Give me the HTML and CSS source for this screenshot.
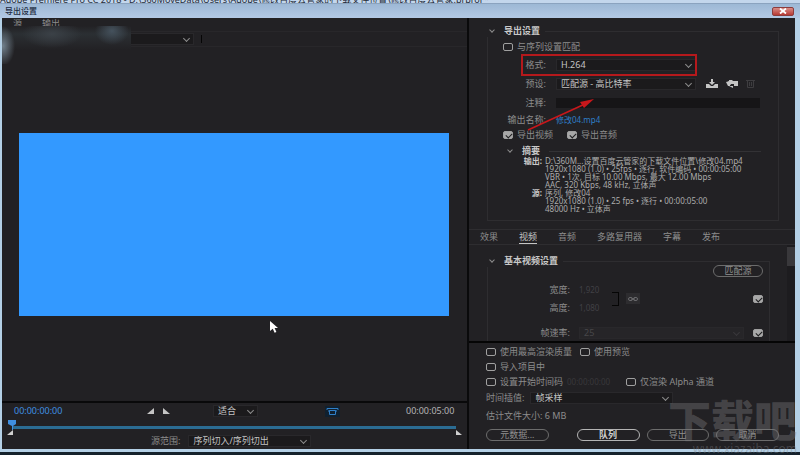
FILE: index.html
```html
<!DOCTYPE html>
<html lang="zh-CN">
<head>
  <meta charset="UTF-8" />
  <meta name="viewport" content="width=device-width, initial-scale=1" />
  <title>导出设置</title>
  <link rel="stylesheet" href="styles.css">
</head>
<body>

<div class="app-title">Adobe Premiere Pro CC 2018 - D:\360MoveData\Users\Adobe\修改百度云管家的下载文件位置\修改百度云管家.prproj *</div>

<div class="dialog">
  <header class="titlebar">
    <h1>导出设置</h1>
    <button class="close" aria-label="关闭">
      <svg width="8" height="6" viewBox="0 0 8 6"><path d="M1 0.5L7 5.5M7 0.5L1 5.5" stroke="#fff" stroke-width="1.8" /></svg>
    </button>
  </header>

  <main class="content">
    <!-- Preview -->
    <section class="preview">
      <div class="source-tabs"><a href="#">源</a><a href="#">输出</a></div>
      <div class="scale-row">
        <span class="select scale-select"><select aria-label="源缩放"><option></option></select></span>
      </div>
      <div class="smudge"></div>
      <div class="stage"><div class="frame"></div></div>

      <div class="transport">
        <div class="time-row">
          <span class="timecode current">00:00:00:00</span>
          <div class="marks">
            <button aria-label="设置入点"><svg width="7" height="6" viewBox="0 0 7 6"><path d="M0 6L7 0V6Z" fill="#c4c4c4" /></svg></button>
            <button aria-label="设置出点"><svg width="7" height="6" viewBox="0 0 7 6"><path d="M0 0L7 6H0Z" fill="#c4c4c4" /></svg></button>
          </div>
          <span class="select fit-select"><select aria-label="缩放级别"><option>适合</option></select></span>
          <button class="aspect" aria-label="长宽比校正">
            <svg width="13" height="9" viewBox="0 0 13 9" fill="none" stroke="#2f7fc8"><path d="M1 3V1.5H12V3M3.5 3.5H9.5V7.5H3.5Z" /><path d="M2 4L4 4M9 4L11 4" /></svg>
          </button>
          <span class="timecode duration">00:00:05:00</span>
        </div>
        <div class="timeline">
          <div class="track"></div>
          <svg class="playhead" width="8" height="10" viewBox="0 0 8 10"><path d="M0 0H8V4L5 6V10H4V6L0 4Z" fill="#3f8fe0" /></svg>
          <svg class="in-point" width="6" height="5" viewBox="0 0 6 5"><path d="M0 5L6 0V5Z" fill="#d0d0d0" /></svg>
          <svg class="out-point" width="6" height="5" viewBox="0 0 6 5"><path d="M0 0L6 5H0Z" fill="#d0d0d0" /></svg>
        </div>
        <div class="range-row">
          <label for="range">源范围:</label>
          <span class="select range-select"><select id="range"><option>序列切入/序列切出</option></select></span>
        </div>
      </div>
    </section>

    <!-- Settings -->
    <section class="settings">
      <div class="group export-group">
        <h2><i class="chevron"></i>导出设置</h2>
        <label class="check match"><input type="checkbox" /> 与序列设置匹配</label>
        <div class="field format">
          <label for="format">格式:</label>
          <span class="select"><select id="format"><option>H.264</option></select></span>
        </div>
        <div class="field">
          <label for="preset">预设:</label>
          <span class="select"><select id="preset"><option>匹配源 - 高比特率</option></select></span>
          <div class="preset-actions">
            <button aria-label="保存预设"><svg width="12" height="9" viewBox="0 0 12 9" fill="#c4c4c4"><path d="M5 0H7V3H9L6 6L3 3H5Z" /><path d="M0 5H3L5 7H7L9 5H12V9H0Z" /></svg></button>
            <button aria-label="导入预设"><svg width="12" height="9" viewBox="0 0 12 9" fill="#c4c4c4"><path d="M3 1H6L7 2H12V7H8V5H5V6L1 3.5L3 2Z" /><path d="M0 3L4 2V7H7V9L3 7H2Z" /></svg></button>
            <button aria-label="删除预设" disabled><svg width="9" height="9" viewBox="0 0 9 9" fill="none" stroke="#3e3d40"><path d="M0 1.5H9M1.5 1.5V8.5H7.5V1.5M3.5 3V7M5.5 3V7" /></svg></button>
          </div>
        </div>
        <div class="field">
          <label for="comment">注释:</label>
          <input type="text" id="comment" />
        </div>
        <div class="field output-name"><span class="label">输出名称:</span><a href="#">修改04.mp4</a></div>
        <div class="checks">
          <label class="check"><input type="checkbox" checked /> 导出视频</label>
          <label class="check"><input type="checkbox" checked /> 导出音频</label>
        </div>
        <h3><i class="chevron"></i>摘要</h3>
        <dl>
          <dt>输出:</dt>
          <dd>D:\360M...设置百度云管家的下载文件位置\修改04.mp4<br>1920x1080 (1.0) • 25fps • 逐行, 软件编码 • 00:00:05:00<br>VBR • 1次, 目标 10.00 Mbps, 最大 12.00 Mbps<br>AAC, 320 Kbps, 48 kHz, 立体声</dd>
          <dt>源:</dt>
          <dd>序列, 修改04<br>1920x1080 (1.0) • 25 fps • 逐行 • 00:00:05:00<br>48000 Hz • 立体声</dd>
        </dl>
        <!-- callout on the format drop-down -->
        <div class="callout"></div>
        <svg class="arrow" width="68" height="32" viewBox="0 0 68 32"><path d="M1 31L58 5" stroke="#c8171b" stroke-width="1.6" /><path d="M67 0L53 3L57 9Z" fill="#c8171b" /></svg>
      </div>

      <nav class="tabs">
        <a href="#">效果</a><a href="#" class="active">视频</a><a href="#">音频</a><a href="#">多路复用器</a><a href="#">字幕</a><a href="#">发布</a>
      </nav>

      <div class="scroller">
        <div class="group video-group">
          <h2><i class="chevron"></i>基本视频设置</h2>
          <button class="pill match-source">匹配源</button>
          <div class="size-row">
            <div class="size-fields">
              <label for="width">宽度:</label><input type="text" id="width" value="1,920" disabled />
              <label for="height">高度:</label><input type="text" id="height" value="1,080" disabled />
            </div>
            <i class="bracket"></i>
            <button class="link" aria-label="链接宽高" disabled><svg width="10" height="4" viewBox="0 0 10 4" fill="none" stroke="#6a6a6d"><rect x="0.5" y="0.5" width="4" height="3" rx="1.5" /><rect x="5.5" y="0.5" width="4" height="3" rx="1.5" /><path d="M3 2H7" /></svg></button>
            <input type="checkbox" aria-label="匹配尺寸" checked />
          </div>
          <div class="rate-row">
            <label for="rate">帧速率:</label>
            <span class="select"><select id="rate" disabled><option>25</option></select></span>
            <input type="checkbox" aria-label="匹配帧速率" checked />
          </div>
        </div>
        <div class="scrollbar"></div>
      </div>

      <div class="footer">
        <div class="options">
          <label class="check"><input type="checkbox" /> 使用最高渲染质量</label>
          <label class="check"><input type="checkbox" /> 使用预览</label>
        </div>
        <div class="options"><label class="check"><input type="checkbox" /> 导入项目中</label></div>
        <div class="options">
          <label class="check"><input type="checkbox" /> 设置开始时间码</label>
          <span class="start-code">00:00:00:00</span>
          <label class="check alpha"><input type="checkbox" /> 仅渲染 Alpha 通道</label>
        </div>
        <div class="interp">
          <label for="interp">时间插值:</label>
          <span class="select"><select id="interp"><option>帧采样</option></select></span>
        </div>
        <p class="estimate">估计文件大小: 6 MB</p>
        <div class="buttons">
          <button class="pill meta">元数据...</button>
          <button class="pill queue">队列</button>
          <button class="pill">导出</button>
          <button class="pill">取消</button>
        </div>
      </div>
    </section>
  </main>
</div>

<svg class="cursor" width="8" height="12" viewBox="0 0 8 12"><path d="M0 0L8 7H4.6L6.4 11L4.6 11.8L2.8 7.8L0 10Z" fill="#fff" /></svg>
<div class="watermark"><b>下载吧</b><span>www.xiazaiba.com</span></div>

</body>
</html>
```
FILE: styles.css
```css
* {
  box-sizing: border-box;
}
body {
  margin: 0;
  height: 100vh;
  display: flex;
  flex-direction: column;
  position: relative;
  overflow: hidden;
  background: #16222c;
  color: #8c8c8c;
  font-family: "Noto Sans", "Noto Sans CJK SC", sans-serif;
  font-size: 9px;
  line-height: 12px;
}
button, input, select {
  font: inherit;
  color: inherit;
  margin: 0;
  padding: 0;
  border: none;
  background: none;
}
button {
  display: flex;
  align-items: center;
  justify-content: center;
}
a {
  color: inherit;
  text-decoration: none;
}
h1, h2, h3, p, dl, dd {
  margin: 0;
}
.app-title {
  flex: none;
  height: 5px;
  margin-bottom: -2px;
  background: #c3d6ec;
  color: #222a36;
  overflow: hidden;
  white-space: nowrap;
  line-height: 0;
}
.dialog {
  position: relative;
  flex: 1;
  min-height: 0;
  display: flex;
  flex-direction: column;
  padding: 0 5px 3px 2px;
  margin-bottom: 3px;
  background: #b4d0e6;
  border-top: 1px solid #8ba3bf;
}
.titlebar {
  flex: none;
  height: 14px;
  margin: 0 -5px 0 -2px;
  padding: 0 6px 0 5px;
  display: flex;
  align-items: center;
  justify-content: space-between;
  background: linear-gradient(#9db8d5, #b3c9e4);
}
.titlebar h1 {
  font-size: 8px;
  font-weight: 500;
  color: #1e2c42;
}
.close {
  width: 22px;
  height: 9px;
  border: 1px solid #8c3c3c;
  border-radius: 2px;
  background: linear-gradient(#d98c86, #b83a34);
}
.content {
  flex: 1;
  min-height: 0;
  display: grid;
  grid-template-columns: 1fr 326px;
  grid-template-rows: minmax(0, 1fr);
  gap: 2px;
  background: #0a0a0b;
}

/* drop-downs */
.select {
  position: relative;
  display: flex;
  height: 12px;
  background: #1b1a1c;
  border: 1px solid #29282b;
  color: #c4c4c4;
}
.select select {
  appearance: none;
  flex: 1;
  min-width: 0;
  padding-left: 4px;
  line-height: 10px;
}
.select::after {
  content: "";
  position: absolute;
  right: 4px;
  top: 2px;
  width: 4px;
  height: 4px;
  border: solid #8c8c8c;
  border-width: 0 1px 1px 0;
  transform: rotate(45deg);
  pointer-events: none;
}
.chevron {
  width: 4px;
  height: 4px;
  margin: 0 10px 2px 4px;
  border: solid #8c8c8c;
  border-width: 0 1px 1px 0;
  transform: rotate(45deg);
}

/* tick boxes */
input[type="checkbox"] {
  appearance: none;
  flex: none;
  position: relative;
  width: 10px;
  height: 8px;
  border: 1px solid #a0a0a0;
  border-radius: 2px;
}
input[type="checkbox"]:checked {
  background: #a8a8a8;
}
input[type="checkbox"]:checked::after {
  content: "";
  position: absolute;
  left: 3px;
  top: 0;
  width: 3px;
  height: 5px;
  border: solid #1c1c1e;
  border-width: 0 1px 1px 0;
  transform: rotate(45deg);
}
.check {
  display: flex;
  align-items: center;
  gap: 4px;
  white-space: nowrap;
}

/* preview side */
.preview {
  position: relative;
  min-width: 0;
  display: flex;
  flex-direction: column;
  background: #222124;
}
.source-tabs {
  height: 14px;
  padding-left: 11px;
  display: flex;
  gap: 20px;
  border-bottom: 1px solid #28272a;
}
.scale-row {
  height: 15px;
  border-bottom: 1px solid #28272a;
}
.scale-select {
  width: 192px;
  margin-top: 1px;
}
.scale-row::after {
  content: "";
  display: block;
  width: 1px;
  height: 8px;
  margin: -10px 0 0 199px;
  background: #050505;
}
.smudge {
  position: absolute;
  left: 0;
  top: 8px;
  width: 129px;
  height: 38px;
  background:
    radial-gradient(ellipse 17px 14px at 110px 5px, #45525d, transparent),
    radial-gradient(ellipse 12px 20px at 1px 20px, #71808c, transparent),
    radial-gradient(ellipse 30px 14px at 50px 8px, #3b4147, transparent),
    linear-gradient(#222124 0, #2b2f33 8px, #222124 24px);
}
.stage {
  flex: 1;
  display: flex;
  align-items: center;
  padding: 0 18px 0 17px;
  border-bottom: 2px solid #09090a;
}
.frame {
  width: 100%;
  height: 183px;
  background: #3399ff;
}
.transport {
  display: flex;
  flex-direction: column;
}
.time-row {
  display: flex;
  align-items: center;
  padding: 0 11px 0 12px;
  height: 16px;
}
.timecode {
  width: 50px;
}
.current {
  color: #3f8fe0;
}
.duration {
  color: #b4b4b4;
}
.marks {
  display: flex;
  gap: 9px;
  margin-left: 83px;
}
.fit-select {
  width: 45px;
  margin-left: 43px;
}
.aspect {
  width: 15px;
  height: 11px;
  margin: 0 auto;
  background: #10202f;
}
.timeline {
  position: relative;
  height: 14px;
  padding-top: 7px;
}
.track {
  height: 3px;
  margin: 0 11px 0 10px;
  background: #2b6c93;
}
.playhead {
  position: absolute;
  left: 6px;
  top: 1px;
}
.in-point {
  position: absolute;
  left: 5px;
  top: 11px;
}
.out-point {
  position: absolute;
  right: 5px;
  top: 11px;
}
.range-row {
  display: flex;
  align-items: center;
  gap: 8px;
  height: 16px;
  padding-left: 149px;
}
.range-select {
  width: 123px;
}

/* settings side */
.settings {
  min-width: 0;
  display: flex;
  flex-direction: column;
  background: #222124;
}
.group {
  position: relative;
  border: 1px solid #2e2d30;
}
.group h2 {
  position: relative;
  display: flex;
  align-items: center;
  width: max-content;
  margin-top: -7px;
  padding-right: 5px;
  background: #222124;
  font-size: 9px;
  color: #c8c8c8;
}
.export-group {
  margin: 13px 16px 8px 18px;
  padding-bottom: 7px;
}
.export-group h2 {
  margin-left: -2px;
}
.match {
  margin: 4px 0 2px 15px;
}
.field {
  display: grid;
  grid-template-columns: 58px 140px 1fr;
  align-items: center;
  column-gap: 10px;
  height: 19px;
}
.field label, .field .label {
  text-align: right;
}
.field input {
  grid-column: 2 / 4;
  height: 10px;
  margin-right: 18px;
  background: #161517;
}
.preset-actions {
  display: flex;
  align-items: center;
  gap: 8px;
}
.output-name {
  height: 15px;
}
.output-name a {
  color: #2f7fc8;
  font-size: 8px;
}
.checks {
  display: flex;
  gap: 14px;
  margin: 2px 0 4px 15px;
}
h3 {
  display: flex;
  align-items: center;
  margin: 0 17px 0 16px;
  font-size: 9px;
  color: #c8c8c8;
}
h3::after {
  content: "";
  flex: 1;
  height: 1px;
  margin-left: 9px;
  background: #333235;
}
dl {
  display: grid;
  grid-template-columns: 54px 1fr;
  column-gap: 3px;
  font-size: 8px;
  line-height: 8px;
  color: #acacac;
  white-space: nowrap;
}
dt {
  text-align: right;
  font-weight: bold;
  color: #c8c8c8;
}
.callout {
  position: absolute;
  left: 33px;
  top: 22px;
  width: 176px;
  height: 22px;
  border: 2px solid #b5191c;
}
.arrow {
  position: absolute;
  left: 39px;
  top: 67px;
}
.tabs {
  flex: none;
  display: flex;
  gap: 21px;
  height: 16px;
  padding-left: 11px;
  border-top: 1px solid #2e2d30;
  border-bottom: 1px solid #2e2d30;
}
.tabs a {
  height: 14px;
  line-height: 14px;
}
.tabs .active {
  color: #c4c4c4;
  border-bottom: 1px solid #c4c4c4;
}
.scroller {
  flex: 1;
  min-height: 0;
  overflow: hidden;
  display: flex;
  justify-content: space-between;
  border-bottom: 2px solid #050505;
}
.video-group {
  flex: 1;
  height: 100px;
  margin: 16px 17px 0 18px;
  border-bottom: none;
}
.video-group h2 {
  margin-left: -2px;
}
.scrollbar {
  width: 8px;
  background: linear-gradient(#39383b, #39383b) 0 2px / 8px 19px no-repeat #1d1c1f;
}
.pill {
  width: 63px;
  height: 12px;
  border: 1px solid #6c6c6c;
  border-radius: 6px;
  line-height: 10px;
  color: #909090;
  white-space: nowrap;
}
.match-source {
  width: 50px;
  margin: -2px 6px 0 auto;
}
.size-row {
  display: flex;
  align-items: center;
  height: 35px;
  margin: 4px 6px 0 0;
}
.size-fields {
  display: grid;
  grid-template-columns: 82px 30px;
  gap: 6px 9px;
}
.size-fields label, .rate-row label {
  text-align: right;
}
.size-fields input {
  width: 30px;
  height: 12px;
  font-size: 8px;
  color: #414044;
}
.bracket {
  width: 7px;
  height: 14px;
  margin-left: 3px;
  border: 1px solid #050505;
  border-left: none;
}
.link {
  width: 14px;
  height: 11px;
  margin-left: 7px;
  background: #2d2c2f;
}
.size-row > input {
  margin-left: auto;
}
.rate-row {
  display: flex;
  align-items: center;
  gap: 9px;
  height: 14px;
  margin: 10px 6px 0 0;
}
.rate-row label {
  width: 82px;
}
.rate-row .select {
  flex: 1;
  background: #262528;
  color: #48474a;
}
.rate-row .select::after {
  border-color: #39383b;
}
.rate-row select:disabled {
  opacity: 1;
}
.footer {
  padding: 1px 16px 8px 17px;
}
.options {
  display: flex;
  align-items: center;
  height: 15px;
}
.options .check + .check {
  margin-left: 8px;
}
.start-code {
  margin-left: 4px;
  color: #39383b;
  font-size: 8px;
}
.options .alpha {
  margin-left: 16px;
}
.interp {
  display: flex;
  align-items: center;
  gap: 6px;
  height: 17px;
}
.interp .select {
  width: 143px;
}
.estimate {
  padding: 4px 0 7px;
}
.buttons {
  display: flex;
  gap: 7px;
}
.meta {
  margin-right: 21px;
}
.queue {
  border-color: #b4b4b4;
  color: #d0d0d0;
  font-weight: bold;
}

/* overlays */
.cursor {
  position: absolute;
  left: 270px;
  top: 321px;
}
.watermark {
  position: absolute;
  right: 3px;
  bottom: 0;
  display: flex;
  flex-direction: column;
  align-items: flex-end;
  color: rgba(125, 125, 128, 0.4);
  pointer-events: none;
}
.watermark b {
  font-size: 43px;
  line-height: 45px;
  font-weight: 900;
}
.watermark span {
  font-size: 12px;
  line-height: 12px;
}
```
